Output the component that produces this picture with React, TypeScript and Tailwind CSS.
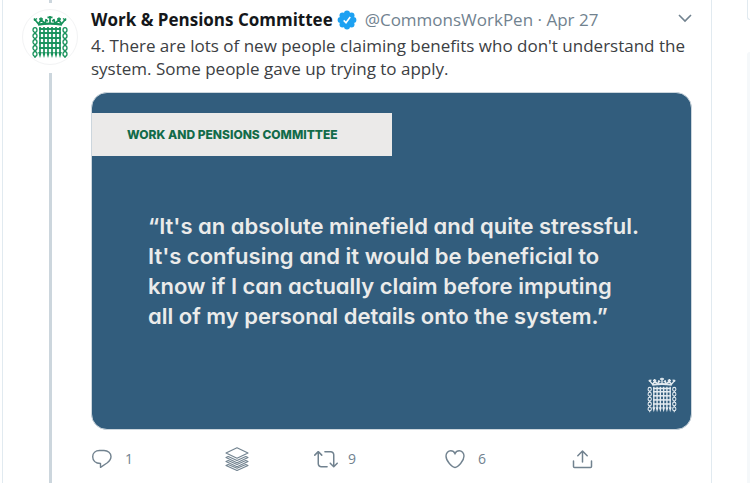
import type { ReactNode } from "react";

const bars = [8, 12, 16, 20, 24, 28];
const rails = [14, 18, 23, 28, 33];
const links = [15, 21, 27, 33, 39];

function Portcullis({ className }: { className: string }) {
    return (
        <svg viewBox="0 0 36 44" className={className} fill="none" stroke="currentColor" aria-hidden="true">
            {/* Crown */}
            <path d="M6 9.6 Q18 7.6 30 9.6" strokeWidth="2.4" />
            <path d="M6.5 9 L2 3.5 M6.5 9 L9 5 M9 2.5 V5 M9 5 L13 8.5 L14.5 4 M18 8.5 V1 M15.5 2.4 H20.5 M29.5 9 L34 3.5 M29.5 9 L27 5 M27 2.5 V5 M27 5 L23 8.5 L21.5 4" strokeWidth="1.7" />
            <path d="M2 5.5 L5 3.5 M34 5.5 L31 3.5 M7 4 H11 M25 4 H29 M13 5 L16 6 M23 5 L20 6" strokeWidth="1.5" />
            {/* Grille */}
            {bars.map((x) => (
                <g key={x}>
                    <path d={`M${x} 12 V39`} strokeWidth="1.7" />
                    <path d={`M${x - 1.8} 37 L${x} 43 L${x + 1.8} 37 Z`} fill="currentColor" stroke="none" />
                </g>
            ))}
            {rails.map((y) => (
                <path key={y} d={`M7 ${y} H29`} strokeWidth="1.9" />
            ))}
            {/* Chains */}
            {links.map((y) => (
                <g key={y} strokeWidth="1.3">
                    <ellipse cx="3" cy={y} rx="2" ry="2.3" />
                    <ellipse cx="33" cy={y} rx="2" ry="2.3" />
                    <path d={`M3 ${y + 2} V${y + 4} M33 ${y + 2} V${y + 4}`} />
                </g>
            ))}
        </svg>
    );
}

function VerifiedBadge() {
    return (
        <svg viewBox="0 0 20 20" className="size-5 shrink-0" role="img" aria-label="Verified account">
            <g fill="#1da1f2">
                <circle cx="10" cy="10" r="7.5" />
                <circle cx="10" cy="3.6" r="3" />
                <circle cx="14.5" cy="5.5" r="3" />
                <circle cx="16.4" cy="10" r="3" />
                <circle cx="14.5" cy="14.5" r="3" />
                <circle cx="10" cy="16.4" r="3" />
                <circle cx="5.5" cy="14.5" r="3" />
                <circle cx="3.6" cy="10" r="3" />
                <circle cx="5.5" cy="5.5" r="3" />
            </g>
            <path d="M6.7 10.4 L9 12.7 L13.2 7" fill="none" stroke="#fff" strokeWidth="1.6" />
        </svg>
    );
}

type ActionProps = { label: string; count?: number; children: ReactNode };

function Action({ label, count, children }: ActionProps) {
    return (
        <button type="button" aria-label={label} className="flex items-center gap-2.5 text-left text-sm">
            <svg viewBox="0 0 24 24" className="size-6" fill="currentColor" aria-hidden="true">
                {children}
            </svg>
            {count !== undefined && <span>{count}</span>}
        </button>
    );
}

export default function App() {
    return (
        <div className="flex h-screen overflow-hidden bg-white pl-0.5 font-['Open_Sans','Noto_Sans',sans-serif] text-[#3c4043]">
            <main className="flex min-w-0 flex-1 border-x border-[#e1eaf0] pr-[19px] pl-[19px]">
                {/* Thread line and avatar */}
                <div className="flex w-14 shrink-0 flex-col items-center">
                    <div className="h-[3px] w-[3px] bg-[#ccd6dd]" />
                    <div className="my-1.5 flex size-14 shrink-0 items-center justify-center rounded-full border border-[#f2f3f4]">
                        <Portcullis className="h-11 w-9 text-[#16915a]" />
                    </div>
                    <div className="mt-0.5 w-[3px] flex-1 bg-[#ccd6dd]" />
                </div>

                <article className="ml-[13px] min-w-0 flex-1 pt-2">
                    <header className="flex h-6 items-center text-[17px] whitespace-nowrap">
                        <a href="#profile" className="font-bold text-[#14171a]">Work &amp; Pensions Committee</a>
                        <span className="mx-1 flex"><VerifiedBadge /></span>
                        <span className="ml-1 text-[#71828f]">@CommonsWorkPen · Apr 27</span>
                        <button type="button" aria-label="More" className="ml-auto text-[#71828f]">
                            <svg viewBox="0 0 14 14" className="size-3.5" fill="none" stroke="currentColor" strokeWidth="1.6">
                                <path d="M1 2 L7 8 L13 2" />
                            </svg>
                        </button>
                    </header>
                    <p className="mt-0.5 text-[17px] leading-[23px]">
                        4. There are lots of new people claiming benefits who don't understand the system. Some people gave up trying to apply.
                    </p>

                    {/* Quote card */}
                    <div className="mt-3 flex h-[338px] flex-col rounded-2xl border border-[#ccd6dd] bg-[#325d7d] pt-5">
                        <div className="flex h-[43px] w-1/2 items-center bg-[#ebeae9] pl-[35px] font-['Inter',sans-serif] text-xs font-extrabold whitespace-nowrap text-[#126b49]">
                            WORK AND PENSIONS COMMITTEE
                        </div>
                        <blockquote className="mt-[55px] pl-14 font-['Inter',sans-serif] text-[22px] leading-[30px] font-semibold whitespace-nowrap text-[#ebebea] [font-feature-settings:'cv11']">
                            “It's an absolute minefield and quite stressful.
                            <br />
                            It's confusing and it would be beneficial to
                            <br />
                            know if I can actually claim before imputing
                            <br />
                            all of my personal details onto the system.”
                        </blockquote>
                        <Portcullis className="mt-auto mr-3.5 mb-4 h-9 w-[30px] self-end text-[#e4ebf0]" />
                    </div>

                    <div className="mt-[17px] grid grid-cols-[134fr_89fr_130fr_128fr_120fr] text-[#71828f]">
                        <Action label="Reply" count={1}>
                            <path d="M8.5 3.5 H13 C17 3.5 20 6 20 9.5 C20 12.2 18.5 14.2 16 16 L9.5 20.3 V16.5 C4.5 16.3 1.7 13.4 1.7 9.7 C1.7 6 4.5 3.5 8.5 3.5 Z" fill="none" stroke="currentColor" strokeWidth="1.4" strokeLinejoin="round" />
                        </Action>
                        <Action label="Buffer">
                            <g fill="none" stroke="currentColor" strokeWidth="1.1" strokeLinejoin="round">
                                <path d="M12 .7 L23 6 L12 11.2 L1 6 Z" />
                                <path d="M3.2 9.6 L1 10.6 L12 15.7 L23 10.6 L20.8 9.6 L12 13.5 Z" />
                                <path d="M3.2 13.6 L1 14.6 L12 19.7 L23 14.6 L20.8 13.6 L12 17.5 Z" />
                                <path d="M3.2 17.4 L1 18.4 L12 23.4 L23 18.4 L20.8 17.4 L12 21.2 Z" />
                            </g>
                        </Action>
                        <Action label="Retweet" count={9}>
                            <path d="M23.77 15.67c-.292-.293-.767-.293-1.06 0l-2.22 2.22V7.65c0-2.068-1.683-3.75-3.75-3.75h-5.85c-.414 0-.75.336-.75.75s.336.75.75.75h5.85c1.24 0 2.25 1.01 2.25 2.25v10.24l-2.22-2.22c-.293-.293-.768-.293-1.06 0s-.294.768 0 1.06l3.5 3.5c.145.147.337.22.53.22s.383-.072.53-.22l3.5-3.5c.294-.292.294-.767 0-1.06zm-10.66 3.28H7.26c-1.24 0-2.25-1.01-2.25-2.25V6.46l2.22 2.22c.148.147.34.22.532.22s.384-.073.53-.22c.293-.293.293-.768 0-1.06l-3.5-3.5c-.293-.294-.768-.294-1.06 0l-3.5 3.5c-.294.292-.294.767 0 1.06s.767.293 1.06 0l2.22-2.22V16.7c0 2.068 1.683 3.75 3.75 3.75h5.85c.414 0 .75-.336.75-.75s-.337-.75-.75-.75z" />
                        </Action>
                        <Action label="Like" count={6}>
                            <path d="M11 20.5 C8 20.3 2 14 2 9 C2 6 4.2 3.7 6.8 3.7 C8.8 3.7 10.3 5 11 6.6 C11.7 5 13.2 3.7 15.2 3.7 C17.8 3.7 20 6 20 9 C20 14 14 20.3 11 20.5 Z" fill="none" stroke="currentColor" strokeWidth="1.4" />
                        </Action>
                        <Action label="Share">
                            <g fill="none" stroke="currentColor" strokeWidth="1.5" strokeLinecap="round" strokeLinejoin="round">
                                <path d="M10.5 15 V4 M5.8 8.7 L10.5 4 L15.2 8.7" />
                                <path d="M1.5 14 V19.5 Q1.5 20.5 2.5 20.5 H18.5 Q19.5 20.5 19.5 19.5 V14" />
                            </g>
                        </Action>
                    </div>
                </article>
            </main>

            {/* Sidebar edge */}
            <aside className="ml-[35px] flex w-[3px] shrink-0 flex-col">
                <div className="h-5 rounded-bl-sm border-b border-l border-[#e1eaf0]" />
                <div className="mt-8 flex-1 rounded-tl-sm bg-[#f5f8fa]" />
            </aside>
        </div>
    );
}
